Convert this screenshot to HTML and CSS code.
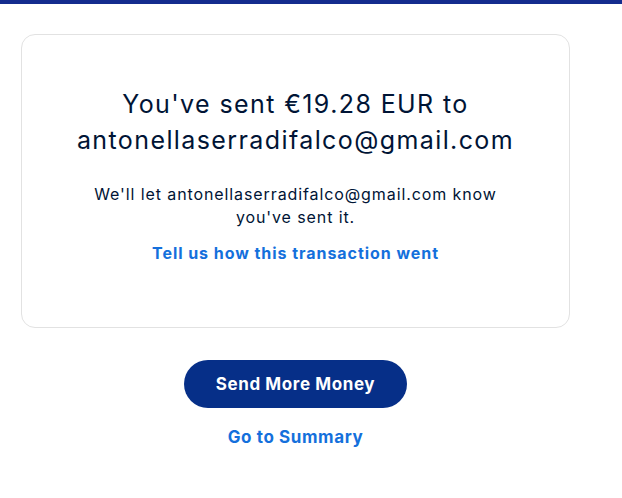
FILE: index.html
```
<!DOCTYPE html>
<html lang="en">
<head>
<meta charset="utf-8">
<title>Payment sent</title>
<link rel="stylesheet" href="styles.css">
</head>
<body>
<div class="topbar"></div>
<main class="page">
  <section class="card">
    <h1 class="title">You've sent €19.28 EUR to<br>antonellaserradifalco@gmail.com</h1>
    <p class="note">We'll let antonellaserradifalco@gmail.com know<br>you've sent it.</p>
    <a class="link feedback" href="#">Tell us how this transaction went</a>
  </section>
  <div class="actions">
    <button class="btn-primary" type="button">Send More Money</button>
    <a class="link summary" href="#">Go to Summary</a>
  </div>
</main>
</body>
</html>
```
FILE: styles.css
```
* { box-sizing: border-box; }
body {
  margin: 0;
  background: #ffffff;
  font-family: "Inter", "Liberation Sans", sans-serif;
  color: #001435;
}
.topbar {
  height: 4px;
  background: #142c8e;
}
.page {
  width: 549px;
  margin-left: 21px;
  padding-top: 30px;
}
.card {
  border: 1px solid #e2e2e2;
  border-radius: 14px;
  height: 294px;
  padding: 51px 20px 0;
  display: flex;
  flex-direction: column;
  align-items: center;
  text-align: center;
}
.title {
  margin: 0;
  font-weight: 400;
  font-size: 25px;
  line-height: 36px;
  letter-spacing: 1.4px;
  color: #001435;
}
.note {
  margin: 25px 0 0;
  font-size: 16px;
  line-height: 23px;
  letter-spacing: 0.9px;
  color: #001435;
}
.link {
  color: #1470dc;
  font-weight: 700;
  text-decoration: none;
  font-size: 16px;
  line-height: 23px;
  letter-spacing: 0.95px;
}
.feedback {
  margin-top: 13px;
}
.actions {
  display: flex;
  flex-direction: column;
  align-items: center;
  padding-top: 32px;
}
.btn-primary {
  width: 223px;
  height: 48px;
  border: none;
  border-radius: 24px;
  background: #062f88;
  color: #ffffff;
  font-family: "Inter", "Liberation Sans", sans-serif;
  font-weight: 700;
  font-size: 17px;
  letter-spacing: 0.6px;
}
.summary {
  margin-top: 17px;
  font-size: 17px;
  line-height: 24px;
  letter-spacing: 0.6px;
}
```
